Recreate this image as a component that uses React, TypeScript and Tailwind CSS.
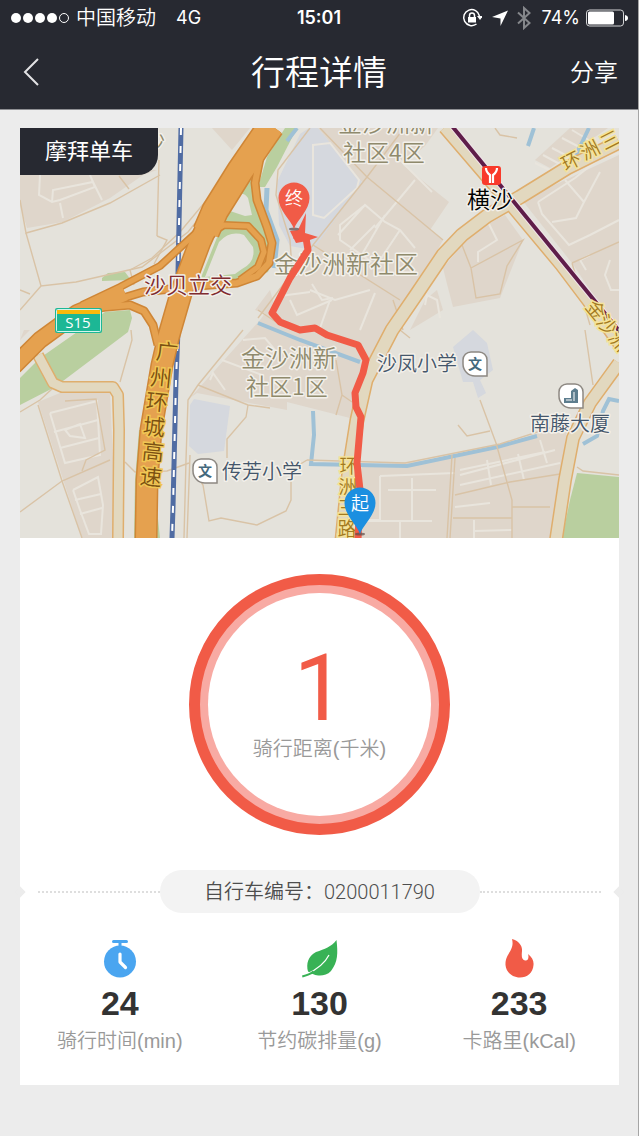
import React from "react";

const BLOCK = "#dfd6cb";
const LAND = "#e4e2db";
const GREEN = "#b9cf9f";
const WATER = "#9fc1d6";

const blocks = [
    "20,170 157,170 143,175 110,198 63,222 27,228 20,205",
    "212,128 250,128 232,150",
    "318,128 438,128 425,146 403,165 449,202 430,230 443,240 393,330 362,385 350,418 287,402 287,410 197,393 190,398 260,320 313,248 362,182",
    "462,245 443,268 447,284 453,307 500,298 523,240 505,215 480,228",
    "410,330 443,310 437,290 425,300",
    "522,200 619,155 619,242 572,263",
    "570,128 608,128 550,168 535,160",
    "572,263 619,242 619,325 600,305",
    "362,466 455,458 540,433 567,430 560,480 550,538 360,538",
    "38,402 60,393 110,393 113,460 113,538 82,538",
    "24,330 30,330 20,340",
    "255,310 270,290 278,318",
];

const greens = [
    "285,128 297,128 277,167 265,187 258,187 267,157",
    "253,172 262,205 276,250 268,272 240,282 198,285 214,245 232,200",
    "20,378 40,358 80,330 105,312 130,310 132,318 128,332 55,387 20,405",
    "102,278 108,273 125,272 131,280 102,281",
    "139,430 135,480 134,538 140,538 142,430",
    "156,500 160,538 154,538",
    "577,473 619,477 619,538 562,538 570,500",
];

const lakes = [
    "309,128 318,128 362,182 313,250 290,246 279,225 277,182 300,134",
    "194,399 230,406 224,451 198,454 189,446 190,405",
    "453,347 473,330 487,343 493,370 480,380 486,393 478,398 473,382 463,382",
];

const lanes = [
    "M159 160 157 236 M160 175 110 203 62 223 26 233 20 200",
    "M26 233 41 286 76 282 142 267 188 232 242 165 272 128",
    "M130 270 152 258 180 232 240 160 265 128",
    "M41 286 20 310 M20 290 30 294 M157 236 167 240 154 264 M130 270 134 285",
    "M119 176 129 189 M320 128 367 177 443 240 M367 177 404 128 M367 177 313 245 258 318",
    "M310 128 278 170 276 195 290 240 292 270 M258 310 276 322 M313 245 400 300",
    "M243 330 198 385 188 400 186 460 184 538 M190 455 187 538 M198 385 248 405 270 408",
    "M248 405 246 417 227 439 227 458 M193 470 203 485 209 521 221 518 257 525 286 511 291 500 291 470 307 460",
    "M20 512 62 481 110 460 M125 462 135 472 167 471 189 463",
    "M38 405 62 481 82 538 M20 412 40 400 53 388 M120 382 132 340 131 330",
    "M65 401 96 399 105 450 86 460 82 471",
    "M471 268 523 240 507 266 500 294 476 298 471 268 462 245",
    "M400 330 410 338 M495 128 500 135 517 138",
    "M480 400 496 443 512 500 512 538 M458 425 467 436 490 431 M307 460 405 463 500 444 556 426",
    "M455 458 450 538 M452 455 447 538 M455 495 510 482 560 474 M512 507 550 507 M453 518 512 518",
    "M585 330 593 385 M577 467 583 471 619 475 M572 263 590 325 M572 263 619 242",
    "M393 300 403 330 M336 360 342 395 336 415 M342 395 352 402",
];

const paths = [
    "M40 175 39 195 52 202 60 200 95 187 90 175 M52 202 53 190 93 182 102 200 M60 203 63 218",
    "M313 145 330 143 359 180 357 188 324 218 313 215 Z",
    "M395 155 432 192 M415 180 375 228 M338 235 365 205 385 222 400 230 415 248 M365 205 340 225 340 240 372 262",
    "M375 225 350 250 M400 230 380 260 M385 215 350 275 M310 290 335 300 370 290 M330 300 320 328 M360 330 375 293",
    "M488 222 497 240 478 252 478 262 M538 202 575 178 600 158 619 153 M538 202 542 214 569 245 590 235 619 220",
    "M565 180 584 202 576 218 552 222 M584 202 600 172 M586 270 580 260 590 255 M610 260 605 275 611 290 619 290",
    "M535 163 560 175 M543 155 567 168 M552 148 575 160 M562 138 585 150 M572 130 592 142",
    "M50 413 97 401 100 455 65 463 50 413 M54 432 98 420 M60 448 99 438 M65 430 80 424 85 438 70 436 Z",
    "M73 490 98 477 103 505 101 534 89 534 80 510 73 490 M75 500 101 494 M80 514 102 508",
    "M243 340 265 338 275 350 M210 380 213 373 225 390 M222 360 262 375",
    "M380 476 455 473 M380 476 380 520 360 520 M388 490 436 490 M412 478 412 520 M360 521 432 521 M400 521 400 538",
    "M460 475 555 450 M460 485 560 463 M460 470 545 452 M487 460 491 485 M518 454 524 480 M540 440 547 463 M455 507 490 503 M474 520 474 538 M474 531 512 530",
    "M425 305 427 295 437 300 440 318 M310 292 280 296 M290 300 297 315 332 300 M312 284 322 300 333 298",
];

const minorRoads = [
    { d: "M38 355 53 383 62 387 113 387 118 395 119 430 118 538", w: 11 },
    { d: "M444 128 510 205 560 265 600 318 619 345", w: 11 },
    { d: "M619 363 590 403 573 438 565 480 556 540", w: 13 },
    { d: "M619 142 567 168 520 197 487 216 462 235 443 255 416 295 392 330 366 380 357 420 349 470 342 540", w: 14 },
];

const highways = [
    { d: "M260 158 255 183 257 200 267 227 272 243 269 263 257 276 237 283 197 286 143 292 93 307", w: 8 },
    { d: "M205 242 216 230 224 225 248 226 261 240 264 252 258 267 240 280", w: 7 },
    { d: "M95 308 130 305 144 311 153 325 158 345", w: 8 },
    { d: "M196 233 160 266 120 287 82 305", w: 7 },
    { d: "M125 293 77 313 40 340 14 366", w: 17 },
    { d: "M272 126 240 171 213 213 200 242 182 290 169 335 162 365 151 430 147 480 146 540", w: 22 },
    { d: "M271 126 240 171 215 211 206 232", w: 27 },
];

const rings = [
    { text: "广", x: 167, y: 352 },
    { text: "州", x: 161, y: 378 },
    { text: "环", x: 157, y: 402 },
    { text: "城", x: 154, y: 427 },
    { text: "高", x: 153, y: 452 },
    { text: "速", x: 151, y: 477 },
];

const streets = [
    { text: "环", x: 349, y: 466, r: 0 },
    { text: "洲", x: 348, y: 487, r: 0 },
    { text: "三", x: 347, y: 508, r: 0 },
    { text: "路", x: 347, y: 529, r: 0 },
    { text: "环", x: 571, y: 161, r: -27 },
    { text: "洲", x: 590, y: 150, r: -27 },
    { text: "三", x: 610, y: 140, r: -27 },
    { text: "金", x: 596, y: 310, r: 50 },
    { text: "沙", x: 607, y: 325, r: 50 },
    { text: "洲", x: 619, y: 341, r: 50 },
];

const places = [
    { text: "金沙洲新", x: 338, y: 132, size: 24, color: "#8f8a6c" },
    { text: "社区4区", x: 343, y: 161, size: 23, color: "#8f8a6c" },
    { text: "金沙洲新社区", x: 274, y: 273, size: 24, color: "#8f8a6c" },
    { text: "金沙洲新", x: 241, y: 367, size: 24, color: "#8f8a6c" },
    { text: "社区1区", x: 246, y: 395, size: 23, color: "#8f8a6c" },
    { text: "沙", x: 143, y: 149, size: 22, color: "#8f8a6c" },
    { text: "沙贝立交", x: 144, y: 293, size: 22, color: "#7f2b30" },
    { text: "沙凤小学", x: 377, y: 371, size: 20, color: "#44566b" },
    { text: "传芳小学", x: 222, y: 479, size: 20, color: "#44566b" },
    { text: "南藤大厦", x: 530, y: 431, size: 20, color: "#44566b" },
    { text: "横沙", x: 467, y: 208, size: 23, color: "#000000" },
];

const Pin = ({ x, y, color, text }: { x: number; y: number; color: string; text: string }) => (
    <g transform={`translate(${x} ${y})`}>
        <ellipse cx="0" cy="31" rx="5" ry="1.5" fill="#5b4b48" opacity="0.7" />
        <path d="M0 31 C-3 22 -15.5 12 -15.5 0 A15.5 15.5 0 0 1 15.5 0 C15.5 12 3 22 0 31 Z" fill={color} />
        <text x="0" y="7" fontSize="18" textAnchor="middle" fill="#fff">{text}</text>
    </g>
)

const PlaceMark = ({ x, y, children }: { x: number; y: number; children: React.ReactNode }) => (
    <g transform={`translate(${x} ${y})`}>
        <path
            d="M12 12 H0 A12 12 0 0 1 -12 0 V-4 A8 8 0 0 1 -4 -12 H4 A8 8 0 0 1 12 -4 Z"
            fill="#fff"
            stroke="#8d8882"
            strokeWidth="1.5"
        />
        {children}
    </g>
)

const RouteMap = () => (
    <svg
        className="block w-full h-auto font-[350] font-['Noto_Sans_CJK_SC',sans-serif]"
        viewBox="20 128 599 410"
        role="img"
        aria-label="骑行路线"
    >
        <rect x="20" y="128" width="599" height="410" fill={LAND} />
        {blocks.map((p) => <polygon key={p} points={p} fill={BLOCK} />)}
        {greens.map((p) => <polygon key={p} points={p} fill={GREEN} />)}
        <path d="M233 197 Q243 190 248 198 L252 215 245 216 230 211 Z" fill={LAND} />
        <path d="M219 242 Q230 230 244 235 L253 247 Q256 262 242 269 L235 274 205 277 Z" fill={LAND} />
        {lakes.map((p) => <polygon key={p} points={p} fill="#d5d8de" />)}
        {paths.map((d) => <path key={d} d={d} fill="none" stroke="#e9e5dd" strokeWidth="2" />)}
        <g fill="none" stroke={WATER} strokeWidth="4">
            <path d="M313 411 314 435 311 464 407 466 497 447 537 436" />
            <path d="M258 323 300 340 360 362" />
            <path d="M267 188 266 210 277 240 274 268" strokeWidth="5" />
            <path d="M287 141 297 128 M528 146 534 128 M576 155 589 128" />
            <path d="M619 401 609 399 603 411 597 436 583 444" />
        </g>
        {lanes.map((d) => <path key={d} d={d} fill="none" stroke="#d9c3a6" strokeWidth="1.4" />)}

        <g fill="none" strokeLinejoin="round">
            {minorRoads.map((r) => <path key={r.d} d={r.d} stroke="#dfae6d" strokeWidth={r.w + 1} />)}
            {minorRoads.map((r) => <path key={r.d} d={r.d} stroke="#e2d8bf" strokeWidth={r.w - 2} />)}
            <path d="M181 128 178 273 178 330 176 380 173 507 172 538" stroke="#506ca3" strokeWidth="5" />
            <path d="M181 128 178 273 178 330 176 380 173 507 172 538" stroke="#fff" strokeWidth="2" strokeDasharray="7 11" />
            {highways.map((r) => <path key={r.d} d={r.d} stroke="#cf8636" strokeWidth={r.w + 1} />)}
            {highways.map((r) => <path key={r.d} d={r.d} stroke="#e5a14f" strokeWidth={r.w - 2} />)}
            <path d="M452 126 621 333" stroke="#f0e6ea" strokeWidth="6" />
            <path d="M452 126 621 333" stroke="#5f1d49" strokeWidth="4" />
        </g>

        <g fontSize="22" textAnchor="middle" fill="#7b5011" stroke="#f0c654" strokeWidth="3" paintOrder="stroke">
            {rings.map((l) => <text key={l.text} x={l.x} y={l.y + 8} transform={`rotate(6 ${l.x} ${l.y})`}>{l.text}</text>)}
        </g>
        <g fontSize="19" textAnchor="middle" fill="#a37a20" stroke="#f5e39a" strokeWidth="3" paintOrder="stroke">
            {streets.map((l) => (
                <text key={l.text + l.y} x={l.x} y={l.y + 7} transform={`rotate(${l.r} ${l.x} ${l.y})`}>{l.text}</text>
            ))}
        </g>
        <g stroke="#f3f0ea" strokeWidth="3" strokeLinejoin="round" paintOrder="stroke">
            {places.map((l) => (
                <text key={l.text + l.y} x={l.x} y={l.y} fontSize={l.size} fill={l.color}>{l.text}</text>
            ))}
        </g>

        {/* road number */}
        <rect x="55" y="308" width="47" height="25" rx="2" fill="#1cb795" />
        <rect x="56.5" y="309.5" width="44" height="22" rx="1" fill="#1cb795" stroke="#d4f3eb" />
        <rect x="57" y="310" width="43" height="4" fill="#f8b90c" />
        <text x="78" y="328" fontSize="15" fontWeight="400" textAnchor="middle" fill="#fff" fontFamily="Open Sans, sans-serif">S15</text>

        {/* metro station */}
        <rect x="482" y="166" width="19" height="19" rx="3" fill="#f93a2b" />
        <path d="M486 168 Q486 172 490 175 V183 M497 168 Q497 172 493 175 V183" fill="none" stroke="#fff" strokeWidth="2.2" />

        <PlaceMark x={205} y={471}>
            <text x="0" y="5" fontSize="14" fontWeight="700" textAnchor="middle" fill="#44697d">文</text>
        </PlaceMark>
        <PlaceMark x={475} y={364}>
            <text x="0" y="5" fontSize="14" fontWeight="700" textAnchor="middle" fill="#44697d">文</text>
        </PlaceMark>
        <PlaceMark x={571} y={396}>
            <path d="M-7 2 H0 V-5 L4 -8 7 -6 V7 H-7 Z" fill="#5d7d8e" />
            <path d="M-5 4 H1 M3 -4 V5" stroke="#fff" strokeWidth="1" />
        </PlaceMark>

        <path
            d="M294 235 306 238 308 250 290 278 272 313 280 322 300 330 315 328 327 335 358 345 366 360 363 373 355 393 356 407 361 417 357 463 360 490 358 540"
            fill="none"
            stroke="#f15b47"
            strokeWidth="7"
            strokeLinejoin="round"
        />
        <path d="M290 231 298 230 306 213 305 233 318 237 307 241 296 243 Z" fill="#f15b47" />
        <Pin x={294} y={198} color="#f15b47" text="终" />
        <Pin x={360} y={503} color="#1b8fe0" text="起" />
    </svg>
)

const StatusBar = () => (
    <div className="h-9 px-[10px] grid grid-cols-3 items-center text-xl font-['Inter','Noto_Sans_CJK_SC',sans-serif]">
        <div className="flex items-center">
            <svg className="w-[60px] h-3 mr-[6px]" viewBox="0 0 60 12" fill="#fff">
                <circle cx="6" cy="6" r="5" />
                <circle cx="18" cy="6" r="5" />
                <circle cx="30" cy="6" r="5" />
                <circle cx="42" cy="6" r="5" />
                <circle cx="54" cy="6" r="4.5" fill="none" stroke="#fff" />
            </svg>
            <span className="whitespace-nowrap font-[350]">中国移动</span>
            <span className="ml-5 text-lg">4G</span>
        </div>
        <div className="text-center text-lg font-semibold">15:01</div>
        <div className="flex items-center justify-end">
            <svg className="w-5 h-5 shrink-0" viewBox="0 0 20 20" fill="none" stroke="#fff" strokeWidth="1.5">
                <path d="M17.5 8 A8 8 0 1 0 14.5 16" />
                <path d="M15 8 H21 L18 12 Z" fill="#fff" stroke="none" />
                <rect x="6" y="9" width="8" height="5.5" fill="#fff" stroke="none" />
                <path d="M7.5 9 V7.5 A2.5 2.5 0 0 1 12.5 7.5 V9" />
            </svg>
            <svg className="w-4 h-4 ml-[10px] shrink-0" viewBox="0 0 16 16" fill="#fff">
                <path d="M16 0.5 8.5 16 8.5 8.5 0 7 Z" />
            </svg>
            <svg className="w-4 h-6 ml-2 shrink-0" viewBox="0 0 16 24" fill="none" stroke="#85878b" strokeWidth="2">
                <path d="M2 6.5 13.5 17 8 22 V2 L13.5 7 2 17.5" />
            </svg>
            <span className="ml-[10px] text-lg">74%</span>
            <svg className="w-[42px] h-[18px] ml-[6px] shrink-0" viewBox="0 0 42 18" fill="none">
                <rect x="0.5" y="1" width="37" height="16" rx="3" stroke="#d4d5d6" />
                <rect x="2" y="2.5" width="26" height="13" rx="1.5" fill="#fff" />
                <path d="M39 6 Q42 6.5 42 9 Q42 11.5 39 12 Z" fill="#fff" />
            </svg>
        </div>
    </div>
)

const TimerIcon = () => (
    <svg className="w-10 h-10" viewBox="0 0 40 40" fill="#4aa5f0">
        <circle cx="20" cy="22.5" r="16" />
        <rect x="12" y="1" width="16" height="3" rx="1.5" />
        <rect x="18.5" y="2" width="3" height="6" />
        <path d="M20 15 V23 L25.5 28.5" fill="none" stroke="#fff" strokeWidth="3.2" strokeLinecap="round" strokeLinejoin="round" />
    </svg>
)

const LeafIcon = () => (
    <svg className="w-10 h-10" viewBox="0 0 40 40">
        <path d="M37.5 1 C39 14 39 23 32 32 C27 37.5 19 37 15 35.5 L9 32.5 C7 25 9 17 17 13 C26 10 32 8 37.5 1 Z" fill="#38b255" />
        <path d="M7 35.5 C17 31 25 26 30 16" fill="none" stroke="#fff" strokeWidth="1.2" />
        <path d="M3 36.5 C8 35 11 34 14 31.5 L15.5 34 C11 36 8 37 3.5 38.5 Z" fill="#38b255" />
    </svg>
)

const FlameIcon = () => (
    <svg className="w-10 h-10" viewBox="0 0 40 40">
        <path d="M13 0 C20 2 23.5 7 23 12 C22.5 17 22.5 21 26 21.5 C29.5 22 30 18 29 15 C33 18 35 22 34.5 26 C34 34 28 38.5 21 38.5 C13 38.5 7 33 6.5 26 C6 14 16 12 13 0 Z" fill="#f15b47" />
    </svg>
)

const stats = [
    { icon: <TimerIcon />, value: 24, label: "骑行时间(min)" },
    { icon: <LeafIcon />, value: 130, label: "节约碳排量(g)" },
    { icon: <FlameIcon />, value: 233, label: "卡路里(kCal)" },
];

export default function App() {
    return (
        <div className="min-h-screen bg-[#ececec] border-r border-[#a5a5a5] font-['Liberation_Sans','Noto_Sans_CJK_SC',sans-serif]">
            <header className="bg-[#272931] text-white border-b border-[#8e8f93]">
                <StatusBar />
                <div className="h-[73px] px-5 grid grid-cols-3 items-center">
                    <button className="justify-self-start" aria-label="返回">
                        <svg className="w-6 h-8" viewBox="0 0 24 32" fill="none" stroke="#e3e3e5" strokeWidth="2">
                            <path d="M18 2 5 15 18 28" />
                        </svg>
                    </button>
                    <h1 className="text-center text-[34px] leading-10 font-[350] whitespace-nowrap">行程详情</h1>
                    <button className="justify-self-end text-2xl font-[350]">分享</button>
                </div>
            </header>

            <main className="pl-5 pr-[19px] pt-[18px] pb-[50px]">
                <div className="relative">
                    <RouteMap />
                    <div className="absolute left-0 top-0 px-[25px] h-[47px] flex items-center bg-[#272931] rounded-br-[20px] text-white text-[22px]">
                        摩拜单车
                    </div>
                </div>

                <section className="bg-white pt-9 pb-[30px] font-[350]">
                    <div className="mx-auto w-[261px] h-[261px] rounded-full border-[11px] border-[#f15b47] bg-[#f8aaa3] p-2 flex">
                        <div className="flex-1 rounded-full bg-white flex flex-col items-center pt-[50px]">
                            <div className="text-[92px] leading-[92px] text-[#f15b47] font-normal font-['Roboto',sans-serif]">1</div>
                            <div className="text-xl leading-7 text-[#999]">骑行距离(千米)</div>
                        </div>
                    </div>

                    <div className="relative mt-[35px] px-[18px] flex items-center">
                        <div className="absolute left-[-4px] w-2 h-2 rotate-45 bg-[#ececec]" />
                        <div className="absolute right-[-4px] w-2 h-2 rotate-45 bg-[#ececec]" />
                        <div className="flex-1 border-t-2 border-dotted border-[#dedede]" />
                        <div className="w-[320px] h-[43px] rounded-full bg-[#f3f3f3] flex items-center justify-center text-xl text-[#4d4d4d] font-['Roboto','Noto_Sans_CJK_SC',sans-serif]">
                            自行车编号：0200011790
                        </div>
                        <div className="flex-1 border-t-2 border-dotted border-[#dedede]" />
                    </div>

                    <dl className="mt-[26px] grid grid-cols-3">
                        {stats.map((s) => (
                            <div key={s.label} className="flex flex-col items-center">
                                {s.icon}
                                <dd className="mt-1 text-[34px] leading-10 font-bold text-[#333]">{s.value}</dd>
                                <dt className="mt-1 text-xl leading-7 text-[#999]">{s.label}</dt>
                            </div>
                        ))}
                    </dl>
                </section>
            </main>
        </div>
    )
}
